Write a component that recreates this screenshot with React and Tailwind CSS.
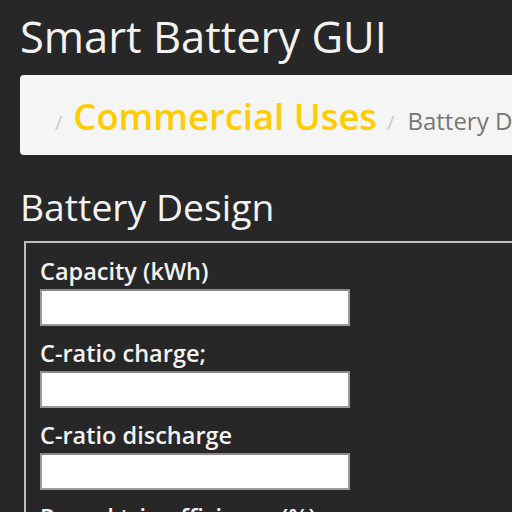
export default function App() {
  const fields = ['Capacity (kWh)', 'C-ratio charge;', 'C-ratio discharge', 'Round trip efficiency (%)']
  return (
    <div className="w-[512px] h-[512px] overflow-hidden bg-[#272727] font-['Open_Sans',sans-serif]">
      <div className="pl-5 pt-[10px]">
        <h1 className="text-[43.5px] leading-[54px] text-[#f2f2f2]">Smart Battery GUI</h1>
        <div className="mt-[11px] w-[600px] h-[80px] rounded bg-[#f5f5f5] flex items-baseline pt-[14px] pl-[35px] gap-[8px]">
          <span className="text-[#cccccc] text-[20px]">/</span>
          <span className="text-[#ffcc00] text-[36.4px] font-semibold ml-[3px]">Commercial Uses</span>
          <span className="text-[#cccccc] text-[20px] ml-[2px]">/</span>
          <span className="text-[#777777] text-[24px] ml-[5px]">Battery Design</span>
        </div>
        <h2 className="mt-[28px] text-[37.3px] leading-[48px] text-[#f2f2f2]">Battery Design</h2>
        <fieldset className="mt-[10px] ml-[4px] w-[600px] border-2 border-[#bdbdbd] pl-[14px] pt-[12px]">
          {fields.map((f) => (
            <div key={f} className="mb-[11px]">
              <label className="block text-[23.5px] leading-[32px] font-semibold text-[#f2f2f2]">{f}</label>
              <input className="block w-[310px] h-[37px] bg-white border-2 border-[#9a9a9a] border-t-[#888] mt-[2px]" />
            </div>
          ))}
        </fieldset>
      </div>
    </div>
  )
}
